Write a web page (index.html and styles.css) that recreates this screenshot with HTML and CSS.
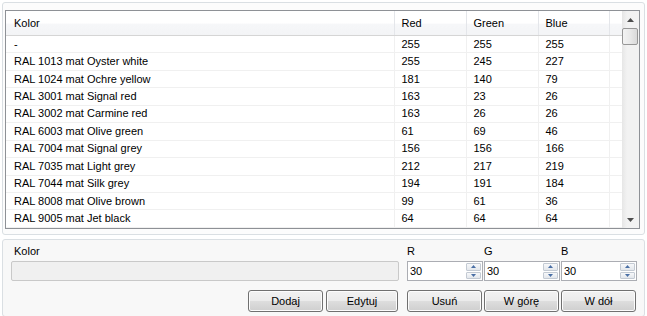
FILE: index.html
```html
<!DOCTYPE html>
<html lang="pl">

<head>
    <meta charset="UTF-8">
    <title>Kolory RAL</title>
    <link rel="stylesheet" href="styles.css">
</head>

<body>
    <div class="list-panel">
        <div class="grid">
            <div class="grid-body">
                <table class="colors">
                    <colgroup>
                        <col class="col-name">
                        <col class="col-num">
                        <col class="col-num">
                        <col class="col-blue">
                        <col>
                    </colgroup>
                    <thead>
                        <tr>
                            <th>Kolor</th>
                            <th>Red</th>
                            <th>Green</th>
                            <th>Blue</th>
                            <th></th>
                        </tr>
                    </thead>
                    <tbody>
                        <tr><td>-</td><td>255</td><td>255</td><td>255</td><td></td></tr>
                        <tr><td>RAL 1013 mat Oyster white</td><td>255</td><td>245</td><td>227</td><td></td></tr>
                        <tr><td>RAL 1024 mat Ochre yellow</td><td>181</td><td>140</td><td>79</td><td></td></tr>
                        <tr><td>RAL 3001 mat Signal red</td><td>163</td><td>23</td><td>26</td><td></td></tr>
                        <tr><td>RAL 3002 mat Carmine red</td><td>163</td><td>26</td><td>26</td><td></td></tr>
                        <tr><td>RAL 6003 mat Olive green</td><td>61</td><td>69</td><td>46</td><td></td></tr>
                        <tr><td>RAL 7004 mat Signal grey</td><td>156</td><td>156</td><td>166</td><td></td></tr>
                        <tr><td>RAL 7035 mat Light grey</td><td>212</td><td>217</td><td>219</td><td></td></tr>
                        <tr><td>RAL 7044 mat Silk grey</td><td>194</td><td>191</td><td>184</td><td></td></tr>
                        <tr><td>RAL 8008 mat Olive brown</td><td>99</td><td>61</td><td>36</td><td></td></tr>
                        <tr><td>RAL 9005 mat Jet black</td><td>64</td><td>64</td><td>64</td><td></td></tr>
                    </tbody>
                </table>
            </div>
            <div class="scrollbar">
                <div class="scroll-arrow">
                    <svg width="7" height="4" viewBox="0 0 7 4"><path d="M3.5 0 L7 4 L0 4 Z" fill="#4d4d4d"/></svg>
                </div>
                <div class="scroll-thumb"></div>
                <div class="scroll-track"></div>
                <div class="scroll-arrow">
                    <svg width="7" height="4" viewBox="0 0 7 4"><path d="M0 0 L7 0 L3.5 4 Z" fill="#4d4d4d"/></svg>
                </div>
            </div>
        </div>
    </div>

    <div class="edit-panel">
        <div class="edit-left">
            <div class="label">Kolor</div>
            <div class="name-field"></div>
            <div class="buttons buttons-left">
                <button class="btn btn-add">Dodaj</button>
                <button class="btn btn-edit">Edytuj</button>
            </div>
        </div>
        <div class="edit-right">
            <div class="rgb">
                <div class="rgb-item">
                    <div class="label">R</div>
                    <div class="spin">
                        <span class="spin-value">30</span>
                        <div class="spin-buttons">
                            <div class="spin-btn"><svg width="5" height="3" viewBox="0 0 5 3"><path d="M2.5 0 L5 3 L0 3 Z" fill="#4a6fa5"/></svg></div>
                            <div class="spin-btn"><svg width="5" height="3" viewBox="0 0 5 3"><path d="M0 0 L5 0 L2.5 3 Z" fill="#4a6fa5"/></svg></div>
                        </div>
                    </div>
                </div>
                <div class="rgb-item">
                    <div class="label">G</div>
                    <div class="spin">
                        <span class="spin-value">30</span>
                        <div class="spin-buttons">
                            <div class="spin-btn"><svg width="5" height="3" viewBox="0 0 5 3"><path d="M2.5 0 L5 3 L0 3 Z" fill="#4a6fa5"/></svg></div>
                            <div class="spin-btn"><svg width="5" height="3" viewBox="0 0 5 3"><path d="M0 0 L5 0 L2.5 3 Z" fill="#4a6fa5"/></svg></div>
                        </div>
                    </div>
                </div>
                <div class="rgb-item">
                    <div class="label">B</div>
                    <div class="spin">
                        <span class="spin-value">30</span>
                        <div class="spin-buttons">
                            <div class="spin-btn"><svg width="5" height="3" viewBox="0 0 5 3"><path d="M2.5 0 L5 3 L0 3 Z" fill="#4a6fa5"/></svg></div>
                            <div class="spin-btn"><svg width="5" height="3" viewBox="0 0 5 3"><path d="M0 0 L5 0 L2.5 3 Z" fill="#4a6fa5"/></svg></div>
                        </div>
                    </div>
                </div>
            </div>
            <div class="buttons buttons-right">
                <button class="btn">Usuń</button>
                <button class="btn">W górę</button>
                <button class="btn">W dół</button>
            </div>
        </div>
    </div>
</body>

</html>
```

FILE: styles.css
```css
body {
    margin: 0;
    padding: 2px;
    width: 643px;
    font-family: "Liberation Sans", Arial, sans-serif;
    font-size: 11px;
    color: #000;
    background-color: #fff;
}

.list-panel {
    border: 1px solid #dadfe3;
    border-radius: 3px;
    background: #fcfcfc;
    padding: 7px 4px 5px 2px;
    height: 219px;
}

.grid {
    display: flex;
    border: 1px solid #8e9196;
    height: 217px;
    background: #fff;
}

.grid-body {
    width: 617px;
    overflow: hidden;
}

.colors {
    border-collapse: collapse;
    table-layout: fixed;
    width: 617px;
}

.col-name {
    width: 388px;
}

.col-num {
    width: 72px;
}

.col-blue {
    width: 71px;
}

.colors th {
    height: 24px;
    padding: 0 0 0 7px;
    text-align: left;
    font-weight: normal;
    background: linear-gradient(#ffffff, #ffffff 50%, #f6f7f9 55%, #f3f4f6);
    border-right: 1px solid #e4e6ea;
    border-bottom: 1px solid #d5d5d5;
}

.colors th:first-child {
    padding-left: 8px;
}

.colors td {
    height: 16.45px;
    padding: 0 0 0 7px;
    line-height: 13px;
    border-right: 1px solid #f0f0f0;
    border-bottom: 1px solid #f0f0f0;
    white-space: nowrap;
}

.colors td:first-child {
    padding-left: 8px;
}

.scrollbar {
    width: 17px;
    display: flex;
    flex-direction: column;
    background: linear-gradient(to right, #e6e6e6, #f2f2f2 30%, #f2f2f2);
}

.scroll-arrow {
    height: 17px;
    display: flex;
    align-items: center;
    justify-content: center;
}

.scroll-thumb {
    height: 17px;
    margin: 0 1px 0 0;
    border: 1px solid #979797;
    border-radius: 2px;
    box-sizing: border-box;
    background: linear-gradient(to right, #f3f3f3, #e9e9e9 50%, #d9d9d9);
}

.scroll-track {
    flex: 1;
}

.edit-panel {
    display: flex;
    margin-top: 4px;
    border: 1px solid #dadfe3;
    border-radius: 3px;
    background: #f8f8f8;
    padding: 5px 6px 4px 8px;
    gap: 8px;
}

.label {
    height: 13px;
    line-height: 13px;
    margin-bottom: 3px;
    padding-left: 3px;
}

.edit-left {
    width: 388px;
}

.name-field {
    height: 20px;
    box-sizing: border-box;
    border: 1px solid #c9c9c9;
    border-radius: 2px;
    background: #f0f0f0;
}

.buttons {
    display: flex;
    margin-top: 9px;
    gap: 3px;
}

.buttons-left {
    justify-content: flex-end;
    padding-right: 1px;
}

.btn {
    height: 22px;
    width: 75px;
    padding: 0;
    font-family: inherit;
    font-size: 11px;
    color: #000;
    border: 1px solid #707070;
    border-radius: 3px;
    background: linear-gradient(#f2f2f2, #ebebeb 48%, #dddddd 52%, #cfcfcf);
    box-shadow: inset 0 0 0 1px #fcfcfc;
}

.btn-edit {
    width: 72px;
}

.rgb {
    display: flex;
    gap: 1px;
}

.rgb-item {
    width: 76px;
}

.rgb-item .label {
    padding-left: 0;
}

.spin {
    display: flex;
    height: 20px;
    box-sizing: border-box;
    border: 1px solid #abadb3;
    background: #fff;
}

.spin-value {
    flex: 1;
    padding-left: 2px;
    line-height: 18px;
}

.spin-buttons {
    width: 15px;
    display: flex;
    flex-direction: column;
    gap: 1px;
    padding: 1px 1px 1px 0;
}

.spin-btn {
    flex: 1;
    display: flex;
    align-items: center;
    justify-content: center;
    border: 1px solid #c3cad3;
    border-radius: 1px;
    background: linear-gradient(#f7f8fa, #e3e7ec);
}

.buttons-right {
    gap: 2px;
}
```
